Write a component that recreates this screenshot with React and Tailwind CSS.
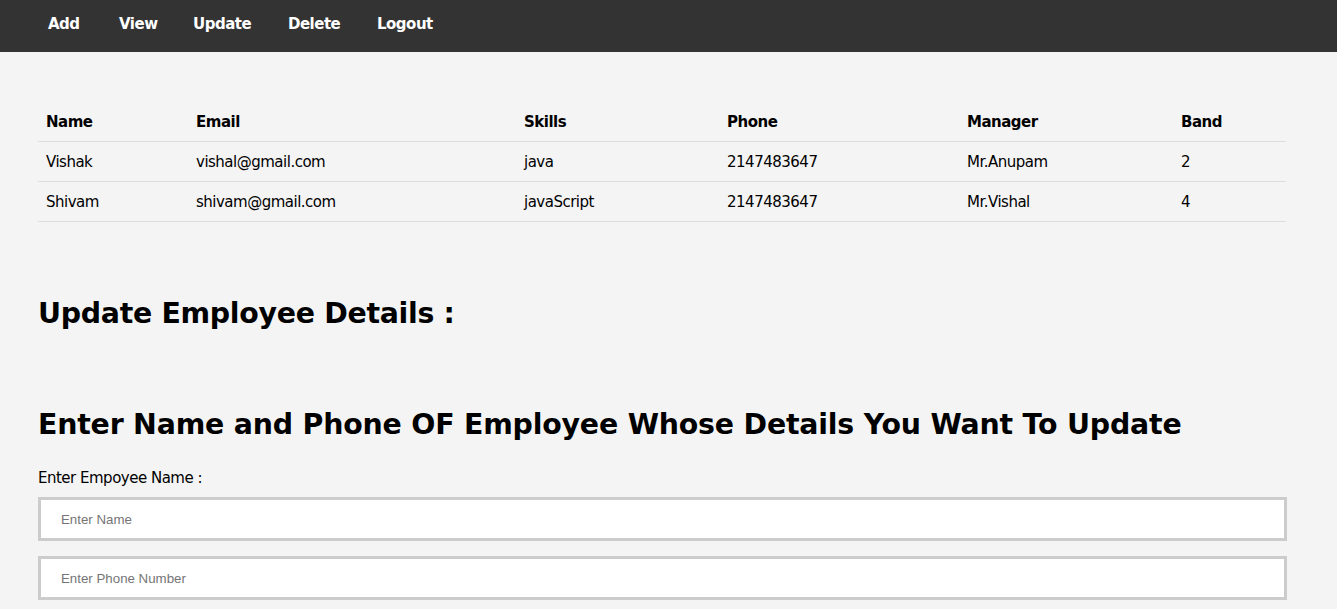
import React from "react";

const employees = [
  { name: "Vishak", email: "vishal@gmail.com", skills: "java", phone: "2147483647", manager: "Mr.Anupam", band: "2" },
  { name: "Shivam", email: "shivam@gmail.com", skills: "javaScript", phone: "2147483647", manager: "Mr.Vishal", band: "4" },
];

const cols = [
  { key: "name", label: "Name", w: "w-[150px]" },
  { key: "email", label: "Email", w: "w-[328px]" },
  { key: "skills", label: "Skills", w: "w-[203px]" },
  { key: "phone", label: "Phone", w: "w-[240px]" },
  { key: "manager", label: "Manager", w: "w-[214px]" },
  { key: "band", label: "Band", w: "" },
];

const links = [
  { label: "Add", w: "w-[71px]" },
  { label: "View", w: "w-[74px]" },
  { label: "Update", w: "w-[95px]" },
  { label: "Delete", w: "w-[89px]" },
  { label: "Logout", w: "w-[80px]" },
];

export default function App() {
  return (
    <div className="min-h-screen bg-[#f4f4f4] text-black font-['Comic_Sans_MS','DejaVu_Sans',sans-serif]">
      <nav className="h-[52px] bg-[#333333] flex items-center pl-12 pb-[4px]">
        {links.map((l) => (
          <a key={l.label} href="#" className={`${l.w} text-white font-bold text-[15px] tracking-[-0.5px]`}>
            {l.label}
          </a>
        ))}
      </nav>

      <div className="pl-[38px] pr-[50px] pt-[49px]">
        <table className="w-[1248px] border-collapse text-[15px] tracking-[-0.5px]">
          <thead>
            <tr className="border-b border-[#dddddd]">
              {cols.map((c) => (
                <th key={c.key} className={`${c.w} h-10 px-2 pt-[2px] text-left font-bold`}>
                  {c.label}
                </th>
              ))}
            </tr>
          </thead>
          <tbody>
            {employees.map((e) => (
              <tr key={e.name} className="border-b border-[#dddddd]">
                {cols.map((c) => (
                  <td key={c.key} className="h-10 px-2 pt-[2px]">
                    {e[c.key]}
                  </td>
                ))}
              </tr>
            ))}
          </tbody>
        </table>

        <h2 className="mt-[71px] text-[28.4px] font-bold tracking-[-0.3px]">Update Employee Details :</h2>
        <h2 className="mt-[69px] text-[28.4px] font-bold tracking-[-0.2px]">
          Enter Name and Phone OF Employee Whose Details You Want To Update
        </h2>

        <label className="block mt-[20px] text-[15px] tracking-[-0.5px]">Enter Empoyee Name :</label>
        <input
          type="text"
          placeholder="Enter Name"
          className="block w-full h-[44px] mt-[8px] bg-white border-[3px] border-[#cccccc] pl-5 font-['Liberation_Sans',sans-serif] text-[13.3px] placeholder:text-[#757575] outline-none"
        />
        <input
          type="text"
          placeholder="Enter Phone Number"
          className="block w-full h-[44px] mt-[15px] bg-white border-[3px] border-[#cccccc] pl-5 font-['Liberation_Sans',sans-serif] text-[13.3px] placeholder:text-[#757575] outline-none"
        />
      </div>
    </div>
  );
}
